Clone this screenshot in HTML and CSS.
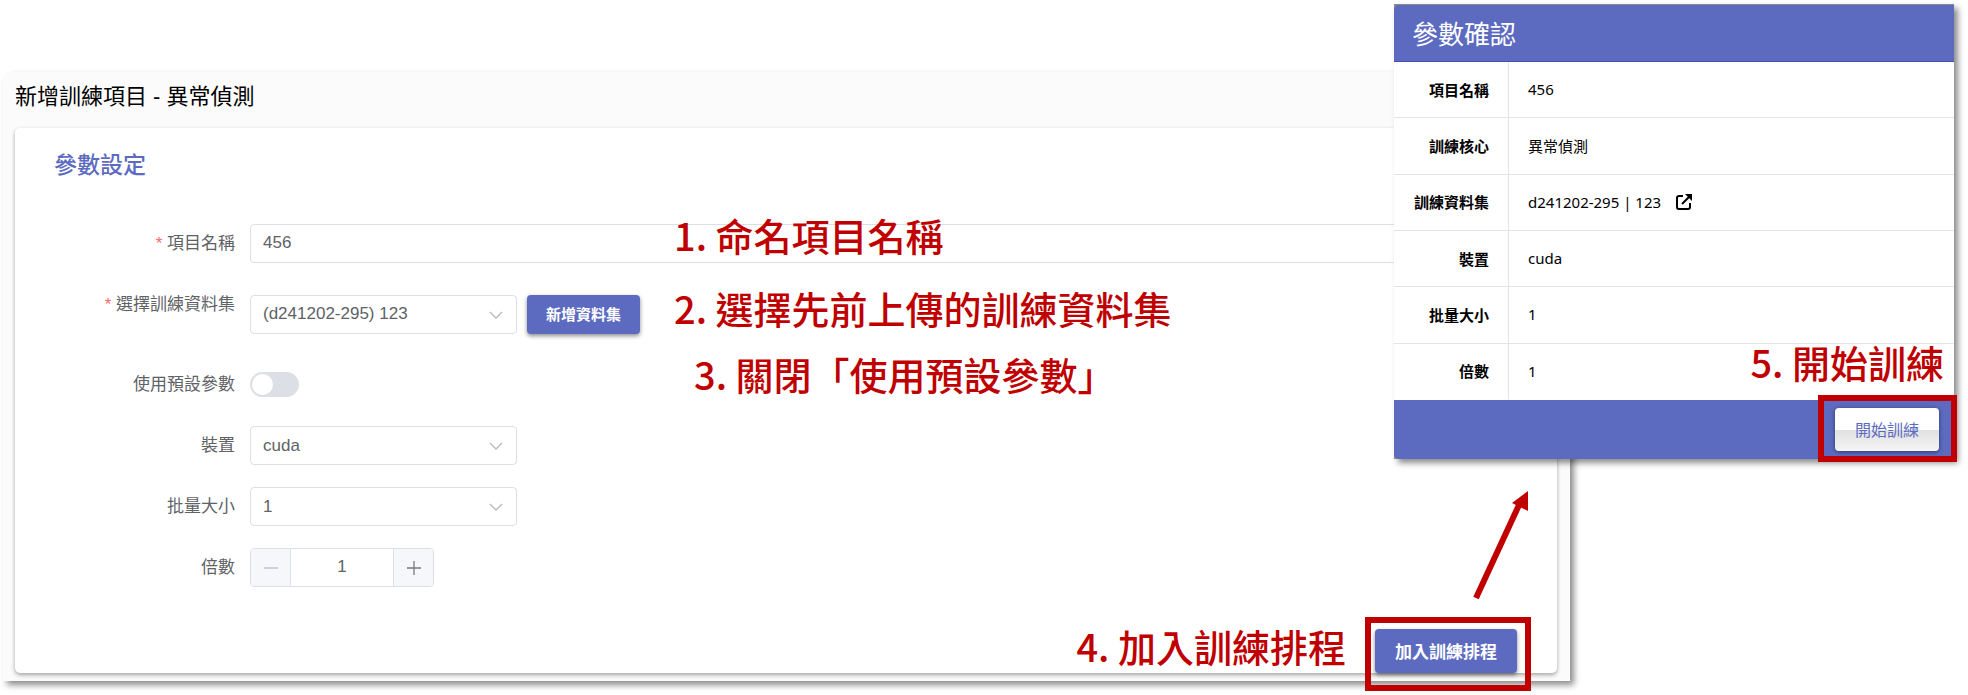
FILE: index.html
```html
<!DOCTYPE html>
<html lang="zh-Hant">
<head>
<meta charset="utf-8">
<meta name="viewport" content="width=device-width, initial-scale=1">
<title>新增訓練項目 - 異常偵測</title>
<link rel="stylesheet" href="styles.css">
</head>
<body>
<main class="panel">
  <h1 class="panel-title">新增訓練項目 - 異常偵測</h1>
  <form class="card">
    <h2 class="card-title">參數設定</h2>
    <div class="rows">
      <div class="row">
        <label class="label required" for="name">項目名稱</label>
        <input class="control input" id="name" type="text" value="456">
      </div>
      <div class="row row-tall">
        <label class="label required" for="dataset">選擇訓練資料集</label>
        <div class="fields">
          <div class="select-box">
            <select class="control select" id="dataset"><option>(d241202-295) 123</option></select>
            <svg class="chevron" viewBox="0 0 14 8"><path d="M1 1l6 6 6-6"/></svg>
          </div>
          <button class="btn btn-small" type="button">新增資料集</button>
        </div>
      </div>
      <div class="row">
        <label class="label" for="defaults">使用預設參數</label>
        <input class="switch" id="defaults" type="checkbox" role="switch">
      </div>
      <div class="row">
        <label class="label" for="device">裝置</label>
        <div class="select-box">
          <select class="control select" id="device"><option>cuda</option></select>
          <svg class="chevron" viewBox="0 0 14 8"><path d="M1 1l6 6 6-6"/></svg>
        </div>
      </div>
      <div class="row">
        <label class="label" for="batch">批量大小</label>
        <div class="select-box">
          <select class="control select" id="batch"><option>1</option></select>
          <svg class="chevron" viewBox="0 0 14 8"><path d="M1 1l6 6 6-6"/></svg>
        </div>
      </div>
      <div class="row">
        <label class="label" for="multiple">倍數</label>
        <div class="stepper">
          <button class="step step-off" type="button" aria-label="減少"><svg viewBox="0 0 14 14"><path d="M0 7h14"/></svg></button>
          <input class="step-value" id="multiple" type="text" value="1">
          <button class="step" type="button" aria-label="增加"><svg viewBox="0 0 14 14"><path d="M0 7h14M7 0v14"/></svg></button>
        </div>
      </div>
    </div>
    <div class="actions"><button class="btn btn-large" type="button">加入訓練排程</button></div>
  </form>
</main>

<section class="dialog" aria-labelledby="dialog-title">
  <h2 class="dialog-title" id="dialog-title">參數確認</h2>
  <table class="summary">
    <tbody>
      <tr><th scope="row">項目名稱</th><td>456</td></tr>
      <tr><th scope="row">訓練核心</th><td>異常偵測</td></tr>
      <tr><th scope="row">訓練資料集</th><td><span class="dataset">d241202-295 | 123
        <a class="open" href="#dataset" aria-label="開啟"><svg viewBox="0 0 16 16"><path d="M7 2H3Q1 2 1 4V13Q1 15 3 15H12Q14 15 14 13V9M6 10L13 3"/><path class="tip" d="M9 0H16V7L13.500 4.500 11.500 2.500Z"/></svg></a></span></td></tr>
      <tr><th scope="row">裝置</th><td>cuda</td></tr>
      <tr><th scope="row">批量大小</th><td>1</td></tr>
      <tr><th scope="row">倍數</th><td>1</td></tr>
    </tbody>
  </table>
  <div class="dialog-footer"><button class="btn-start" type="button">開始訓練</button></div>
</section>

<p class="note note-1">1. 命名項目名稱</p>
<p class="note note-2">2. 選擇先前上傳的訓練資料集</p>
<p class="note note-3">3. 關閉「使用預設參數」</p>
<p class="note note-4">4. 加入訓練排程</p>
<p class="note note-5">5. 開始訓練</p>
<div class="frame frame-queue"></div>
<div class="frame frame-start"></div>
<svg class="arrow" viewBox="0 0 60 112"><path d="M6 108L49 15" stroke="#c00000" stroke-width="6"/><path d="M58 1V21L42 13Z" fill="#c00000"/></svg>
</body>
</html>
```
FILE: styles.css
```css
* { box-sizing: border-box; }

body {
  position: relative;
  margin: 0;
  padding: 72px 398px 14px 3px;
  background: #fff;
  font-family: "Liberation Sans", "Noto Sans CJK TC", sans-serif;
  font-size: 17px;
  color: #606266;
}

h1, h2, p { margin: 0; }

.panel {
  padding: 12px 13px 8px 12px;
  background: #fbfbfb;
  border-radius: 8px 0 0 0;
  box-shadow: 4px 4px 6px rgba(0, 0, 0, 0.45);
}

.panel-title {
  margin-bottom: 18px;
  font-size: 22px;
  font-weight: 400;
  line-height: 26px;
  color: #000;
}

.card {
  padding: 20px 40px 0 39px;
  background: #fff;
  border-radius: 5px;
  box-shadow: 0 2px 4px rgba(0, 0, 0, 0.35);
}

.card-title {
  margin-bottom: 46px;
  font-family: "Noto Sans CJK TC", sans-serif;
  font-size: 23px;
  font-weight: 500;
  line-height: 30px;
  color: #5c6bc0;
}

.rows { display: grid; gap: 22px; }

.row {
  display: grid;
  grid-template-columns: 181px 1fr;
  column-gap: 15px;
  align-items: center;
}

.row-tall { min-height: 58px; align-items: start; }
.row-tall .fields { align-self: center; }

.label { line-height: 39px; text-align: right; }
.required::before { content: "* "; color: #f56c6c; }

.control {
  width: 100%;
  height: 39px;
  padding: 0 12px 1px;
  border: 1px solid #dcdfe6;
  border-radius: 4px;
  background: #fff;
  font: inherit;
  color: inherit;
}

.select { appearance: none; display: block; }
.fields { display: flex; gap: 10px; }
.select-box { position: relative; width: 267px; }

.chevron {
  position: absolute;
  top: 16px;
  right: 14px;
  width: 14px;
  height: 8px;
  fill: none;
  stroke: #b4b8c0;
  stroke-width: 1.3;
  pointer-events: none;
}

.btn {
  border: 0;
  border-radius: 4px;
  background: #5c6bc0;
  box-shadow: 0 2px 4px rgba(0, 0, 0, 0.45);
  font-family: "Noto Sans CJK TC", sans-serif;
  font-weight: 700;
  color: #fff;
}

.btn-small { height: 39px; padding: 0 19px 2px; font-size: 15px; }
.btn-large { height: 44px; padding: 0 20px 2px; font-size: 17px; }

.switch {
  appearance: none;
  width: 49px;
  height: 25px;
  margin: 0;
  padding: 2px;
  border-radius: 13px;
  background: #dcdfe6;
}

.switch::before {
  content: "";
  display: block;
  width: 21px;
  height: 21px;
  border-radius: 50%;
  background: #fff;
}

.switch:checked { background: #5c6bc0; }
.switch:checked::before { margin-left: auto; }

.stepper {
  display: flex;
  width: 184px;
  height: 39px;
  overflow: hidden;
  border: 1px solid #dcdfe6;
  border-radius: 4px;
}

.step {
  display: grid;
  flex: 0 0 39px;
  place-items: center;
  padding: 0;
  border: 0;
  background: #f5f7fa;
}

.step svg { width: 14px; height: 14px; stroke: #77797e; stroke-width: 1.3; }
.step-off svg { stroke: #c0c4cc; }

.step-value {
  flex: 1;
  min-width: 0;
  padding: 0 0 1px;
  border: solid #dcdfe6;
  border-width: 0 1px;
  font: inherit;
  color: inherit;
  text-align: center;
}

.actions { display: flex; justify-content: flex-end; margin-top: 42px; }

.dialog {
  position: absolute;
  top: 4px;
  right: 14px;
  width: 560px;
  border-top: 1px solid #8a8a8a;
  background: #8a8a8a;
  box-shadow: 4px 4px 6px rgba(0, 0, 0, 0.45);
  font-family: "Noto Sans", "Noto Sans CJK TC", sans-serif;
  font-size: 15px;
  color: #000;
}

.dialog-title {
  padding: 0 18px;
  border-bottom: 1px solid #3f51b5;
  border-radius: 5px 0 0 0;
  background: #5c6bc0;
  font-family: "Noto Sans CJK TC", sans-serif;
  font-size: 26px;
  font-weight: 400;
  line-height: 56px;
  color: #fff;
}

.summary {
  width: 100%;
  height: 338px;
  border-spacing: 0;
  background: #fff;
}

.summary th, .summary td { padding: 0 19px 1px; border-bottom: 1px solid #e4e4e4; }
.summary th { width: 115px; border-right: 1px solid #e4e4e4; text-align: right; white-space: nowrap; }
.summary tr:last-child > * { border-bottom-color: #fff; }
.dataset { display: flex; align-items: center; gap: 15px; }
.open { display: flex; color: inherit; }
.open svg { width: 16px; height: 16px; fill: none; stroke: currentColor; stroke-width: 2; }
.open .tip { fill: currentColor; stroke: none; }

.dialog-footer {
  display: flex;
  justify-content: flex-end;
  padding: 8px 15px;
  border-radius: 0 0 0 5px;
  background: #5c6bc0;
}

.btn-start {
  width: 104px;
  height: 43px;
  padding: 0 0 2px;
  border: 0;
  border-radius: 4px;
  background: linear-gradient(#fff 50%, #e0e0e0 50%, #f5f5f5);
  box-shadow: 0 1px 4px rgba(0, 0, 0, 0.5);
  font-family: "Noto Sans CJK TC", sans-serif;
  font-size: 16px;
  color: #5c6bc0;
}

.note {
  position: absolute;
  font-family: "Noto Sans CJK TC", sans-serif;
  font-size: 38px;
  font-weight: 500;
  line-height: 44px;
  white-space: nowrap;
  color: #c00000;
}

.note-1 { top: 213px; left: 674px; }
.note-2 { top: 286px; left: 674px; }
.note-3 { top: 352px; left: 694px; }
.note-4 { top: 624px; right: 622px; }
.note-5 { top: 340px; right: 24px; }

.frame { position: absolute; border: 6px solid #c00000; pointer-events: none; }
.frame-queue { top: 617px; right: 437px; width: 166px; height: 74px; }
.frame-start { top: 395px; right: 11px; width: 139px; height: 67px; }

.arrow { position: absolute; top: 490px; right: 438px; width: 60px; height: 112px; }
```
